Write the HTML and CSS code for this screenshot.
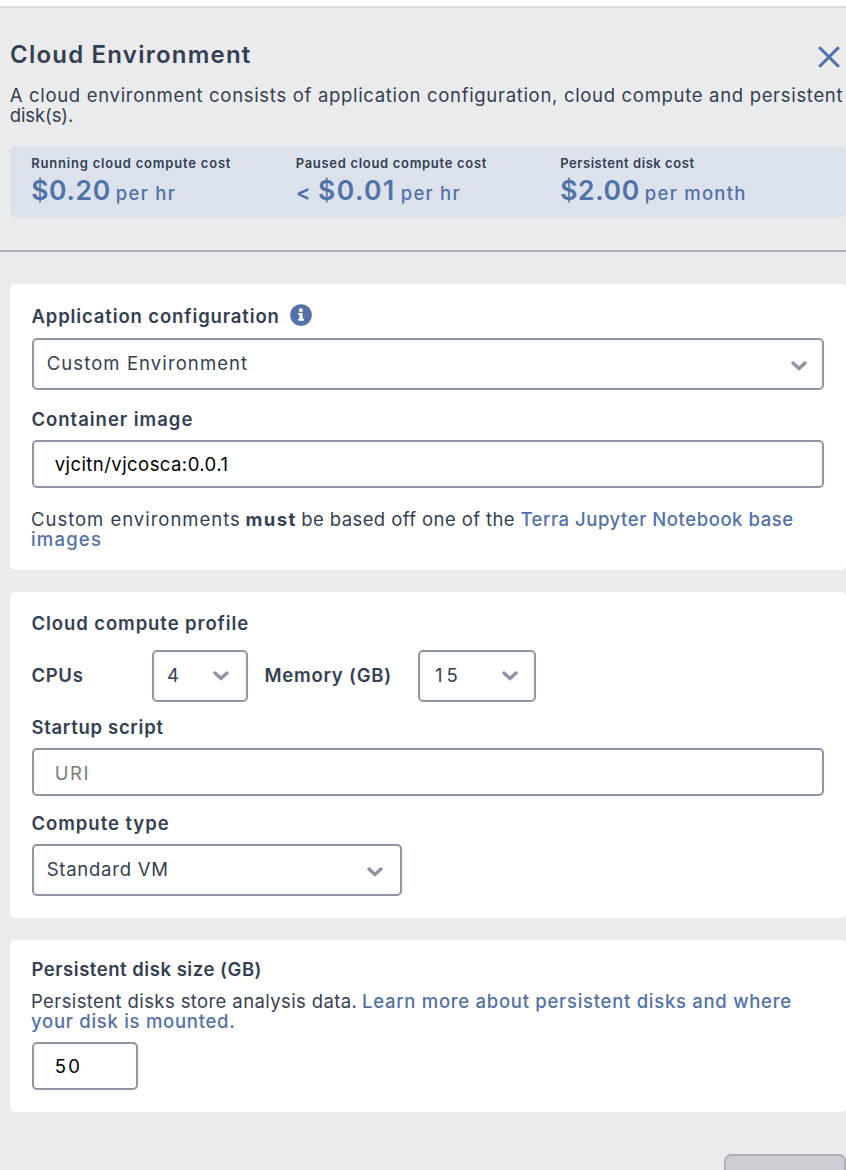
FILE: index.html
```html
<!DOCTYPE html>
<html lang="en">
<head>
<meta charset="utf-8">
<title>Cloud Environment</title>
<link rel="stylesheet" href="styles.css">
</head>
<body>
<main class="panel">
  <header class="header">
    <div class="title-row">
      <h1 class="title">Cloud Environment</h1>
      <svg class="close" width="22" height="22" viewBox="0 0 22 22"><path d="M1.2 1.2 20.8 20.8M20.8 1.2 1.2 20.8"/></svg>
    </div>
    <p class="text intro"><span class="intro-first">A cloud environment consists of application configuration, cloud compute and persistent</span><br><span class="intro-last">disk(s).</span></p>
    <section class="costs">
      <div class="cost">
        <div class="cost-label running">Running cloud compute cost</div>
        <div class="cost-value"><span class="amount">$0.20</span><span class="unit">per hr</span></div>
      </div>
      <div class="cost">
        <div class="cost-label paused">Paused cloud compute cost</div>
        <div class="cost-value"><span class="amount amount-paused"><span class="less">&lt;</span> $0.01</span><span class="unit">per hr</span></div>
      </div>
      <div class="cost">
        <div class="cost-label disk">Persistent disk cost</div>
        <div class="cost-value"><span class="amount">$2.00</span><span class="unit">per month</span></div>
      </div>
    </section>
  </header>

  <section class="card card-app">
    <div class="label-row">
      <h2 class="label app-config">Application configuration</h2>
      <svg class="info" width="22" height="22" viewBox="0 0 22 22"><circle cx="11" cy="11" r="10.8"/><path d="M9.1 4.6h3.5v3.2H9.1zM8.2 9h4.4v5.7h1.3v2H8.2v-2h1.2V11H8.2z"/></svg>
    </div>
    <div class="field select"><span class="custom-env">Custom Environment</span><svg class="chevron" width="16" height="10" viewBox="0 0 16 10"><path d="M2 2l6 5.6L14 2"/></svg></div>
    <h2 class="label container-label">Container image</h2>
    <div class="field input"><span class="image-name">vjcitn/vjcosca:0.0.1</span></div>
    <div class="text note">
      <div class="line"><span class="note-a">Custom environments</span><b class="must">must</b><span class="note-b">be based off one of the</span><a class="link note-link">Terra Jupyter Notebook base</a></div>
      <div class="line"><a class="link images">images</a></div>
    </div>
  </section>

  <section class="card card-compute">
    <h2 class="label profile">Cloud compute profile</h2>
    <div class="machine">
      <span class="label cpus">CPUs</span>
      <div class="field select cpu-select"><span>4</span><svg class="chevron" width="16" height="10" viewBox="0 0 16 10"><path d="M2 2l6 5.6L14 2"/></svg></div>
      <span class="label memory">Memory (GB)</span>
      <div class="field select mem-select"><span class="fifteen">15</span><svg class="chevron" width="16" height="10" viewBox="0 0 16 10"><path d="M2 2l6 5.6L14 2"/></svg></div>
    </div>
    <h2 class="label startup">Startup script</h2>
    <div class="field input"><span class="uri">URI</span></div>
    <h2 class="label compute-type">Compute type</h2>
    <div class="field select type-select"><span class="vm">Standard VM</span><svg class="chevron" width="16" height="10" viewBox="0 0 16 10"><path d="M2 2l6 5.6L14 2"/></svg></div>
  </section>

  <section class="card card-disk">
    <h2 class="label disk-size">Persistent disk size (GB)</h2>
    <div class="text disk-note">
      <div class="line"><span class="store">Persistent disks store analysis data.</span><a class="link learn">Learn more about persistent disks and where</a></div>
      <div class="line"><a class="link mounted">your disk is mounted.</a></div>
    </div>
    <div class="field input size-input"><span class="fifty">50</span></div>
  </section>

  <footer class="footer"><div class="button"></div></footer>
</main>
</body>
</html>
```
FILE: styles.css
```css
* { box-sizing: border-box; }
body {
  margin: 0;
  background: #fff;
  color: #333f52;
  font-family: Inter, "Open Sans", sans-serif;
  font-size: 18.5px;
  line-height: 20px;
}
h1, h2, p { margin: 0; }
.panel {
  margin-top: 6px;
  height: 1164px;
  overflow: hidden;
  background: #eaebed;
  border-top: 2px solid #dcdee0;
}
.header {
  height: 244px;
  padding: 31px 0 0 10px;
  border-bottom: 2px solid #adb1b9;
}
.title-row {
  display: flex;
  justify-content: space-between;
  height: 30px;
  padding-right: 6px;
}
.title {
  font-size: 24px;
  line-height: 32px;
  font-weight: 600;
  letter-spacing: 1.22px;
}
.close { margin-top: 7px; fill: none; stroke: #5271a9; stroke-width: 3; }
.text { white-space: nowrap; }
.intro { margin: 16px 0 0 -.3px; height: 40px; }
.intro-first { letter-spacing: .683px; }
.intro-last { letter-spacing: -.1px; }
.costs {
  display: flex;
  height: 72px;
  margin-top: 21px;
  padding: 8px 0 0 21.2px;
  background: #dce2ec;
  border-radius: 6px;
}
.cost { width: 264.5px; white-space: nowrap; }
.cost-label { font-size: 13px; font-weight: 600; line-height: 18px; }
.running { letter-spacing: .8px; }
.paused { letter-spacing: .69px; }
.disk { letter-spacing: .55px; }
.cost-value {
  display: flex;
  align-items: baseline;
  gap: 5px;
  line-height: 36px;
  color: #5271a9;
}
.amount { font-size: 26.5px; font-weight: 600; letter-spacing: .65px; }
.amount-paused { letter-spacing: 1.45px; }
.less { margin-right: -2px; font-size: 22px; }
.unit { font-weight: 500; letter-spacing: 1.25px; }

.card {
  margin: 0 0 22px 10px;
  padding: 0 22px;
  background: #fff;
  border-radius: 5px;
}
.card-app { height: 286px; margin-top: 32px; padding-top: 22px; }
.card-compute { height: 326px; padding-top: 22px; }
.card-disk { height: 172px; padding-top: 20px; }
.label-row { display: flex; gap: 10px; height: 32px; }
.label {
  margin-left: -.6px;
  height: 20px;
  font-size: 18.5px;
  line-height: 18px;
  font-weight: 600;
  white-space: nowrap;
}
.app-config { line-height: 20px; letter-spacing: .87px; }
.info { margin-top: -2px; fill: #5271a9; }
.info path { fill: #fff; }
.field {
  display: flex;
  align-items: center;
  border: 2px solid #8f94a2;
  border-radius: 5px;
  background: #fff;
  white-space: nowrap;
}
.select { height: 52px; padding: 0 15px 0 12.7px; justify-content: space-between; }
.select span { margin-top: -2px; }
.input { height: 48px; padding-left: 20.7px; color: #000; }
.chevron { margin-top: 3px; fill: none; stroke: #8f94a2; stroke-width: 3.4; stroke-linecap: round; stroke-linejoin: round; }
.custom-env { letter-spacing: 1.09px; }
.container-label { margin-top: 20px; margin-bottom: 10px; letter-spacing: .98px; }
.image-name { margin-top: -1px; letter-spacing: .44px; }
.note { margin: 21px 0 0 -1px; }
.line { display: flex; gap: 4.7px; height: 20px; }
.note-a { letter-spacing: .98px; }
.must { font-weight: 700; letter-spacing: 1.4px; }
.note-b { letter-spacing: .4px; }
.link { color: #5271a9; font-weight: 500; }
.note-link { margin-left: .7px; letter-spacing: .55px; }
.images { letter-spacing: 1.2px; }

.profile { letter-spacing: .92px; }
.machine { display: flex; align-items: center; margin: 16px 0; }
.cpus { width: 120.6px; letter-spacing: .7px; }
.cpu-select { width: 96px; padding-left: 13px; padding-right: 17px; }
.memory { width: 153.6px; margin-left: 16.4px; letter-spacing: .78px; }
.mem-select { width: 118px; padding-left: 15px; padding-right: 16px; }
.machine .chevron { margin-top: 0; }
.fifteen { letter-spacing: 4px; }
.startup { margin-bottom: 10px; letter-spacing: .7px; }
.uri { margin-top: 2px; color: #7b7b7b; letter-spacing: 1.6px; }
.compute-type { margin-top: 18px; margin-bottom: 10px; letter-spacing: .96px; }
.type-select { width: 370px; padding-right: 17px; }
.vm { letter-spacing: .75px; }

.disk-size { letter-spacing: .53px; }
.disk-note { margin: 11px 0 11px -1px; }
.store { letter-spacing: .39px; }
.learn { letter-spacing: .72px; }
.mounted { letter-spacing: .72px; }
.size-input { width: 106px; }
.fifty { margin-top: -1px; letter-spacing: 2.4px; }

.footer { display: flex; justify-content: flex-end; padding-top: 20px; }
.button {
  width: 122px;
  height: 60px;
  background: #cdced4;
  border: 2px solid #abb0b7;
  border-radius: 7px;
}
```
